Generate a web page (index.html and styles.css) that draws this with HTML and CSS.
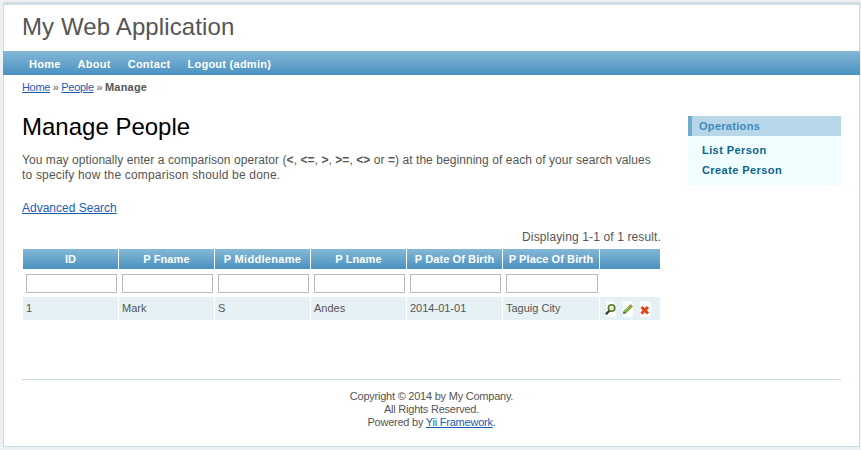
FILE: index.html
```html
<!DOCTYPE html>
<html lang="en">
<head>
<meta charset="utf-8">
<title>My Web Application - Manage People</title>
<link rel="stylesheet" href="styles.css">
</head>
<body>
<div class="page">
  <header class="logo">My Web Application</header>
  <nav class="menu"><a>Home</a><a>About</a><a>Contact</a><a>Logout (admin)</a></nav>
  <div class="crumbs"><a href="#">Home</a> » <a href="#">People</a> » <b>Manage</b></div>
  <div class="columns">
    <main class="content">
      <h1>Manage People</h1>
      <p class="intro"><span class="line1">You may optionally enter a comparison operator (<b>&lt;</b>, <b>&lt;=</b>, <b>&gt;</b>, <b>&gt;=</b>, <b>&lt;&gt;</b> or <b>=</b>) at the beginning of each of your search values</span><br><span class="line2">to specify how the comparison should be done.</span></p>
      <a class="search" href="#">Advanced Search</a>
      <div class="summary">Displaying 1-1 of 1 result.</div>
      <div class="grid head"><div>ID</div><div>P Fname</div><div>P Middlename</div><div>P Lname</div><div>P Date Of Birth</div><div>P Place Of Birth</div><div></div></div>
      <div class="grid filters"><div><input></div><div><input></div><div><input></div><div><input></div><div><input></div><div><input></div><div></div></div>
      <div class="grid row"><div>1</div><div>Mark</div><div>S</div><div>Andes</div><div>2014-01-01</div><div>Taguig City</div>
        <div class="actions">
          <svg viewBox="0 0 16 16"><path class="sheet" d="M3 0h7l3 3v13H3z"/><path d="M6.5 9.5 3 13.2" stroke="#26351c" stroke-width="2.2"/><circle cx="8.6" cy="7" r="3.2" fill="#e4f1d4" stroke="#55792c" stroke-width="1.6"/></svg>
          <svg viewBox="0 0 16 16"><path class="sheet" d="M3 0h7l3 3v13H3z"/><path d="m5 11 5.5-5.5" stroke="#79ae3b" stroke-width="3.6"/><path d="m10 6 1.8-1.8" stroke="#b58b55" stroke-width="3.4"/><path d="m3 13 .7-3 2.4 2.3z" fill="#4c4330"/><path d="m5.4 9.5 4-4" stroke="#b9d67c"/></svg>
          <svg viewBox="0 0 16 16"><path class="sheet" d="M3 0h8l3 3v13H3z"/><path d="m4.5 6 6.5 6.5m0-6.5-6.5 6.5" stroke="#dc4521" stroke-width="3.1"/></svg>
        </div></div>
    </main>
    <aside class="portlet">
      <div class="portlet-title">Operations</div>
      <div class="portlet-body"><a>List Person</a><a>Create Person</a></div>
    </aside>
  </div>
  <footer class="footer">Copyright © 2014 by My Company.<br>All Rights Reserved.<br>Powered by <a href="#">Yii Framework</a>.</footer>
</div>
</body>
</html>
```
FILE: styles.css
```css
* { box-sizing: border-box; }
body { margin: 0; background: #edf1f4; color: #555; font: 12px/15px "Liberation Sans", Arial, sans-serif; height: 450px; overflow: hidden; }
a[href] { color: #1d5cb5; }
.page { margin: 2px 1px 0 3px; height: 445px; background: #fff; border: 1px solid #c9dde3; border-top: 3px solid #d0dde3; }
.logo { height: 46px; padding: 8px 0 0 18px; font-size: 24px; line-height: 28px; letter-spacing: .12px; }
.menu { display: flex; height: 24px; margin: 0 -1px; padding: 0 0 0 26px; gap: 17px; background: linear-gradient(#84b8d6, #4a91c1); color: #fff; font: bold 11px/26px "Liberation Sans", Arial, sans-serif; letter-spacing: .26px; }
.crumbs { height: 26px; padding: 6px 0 0 18px; font-size: 11px; line-height: 13px; letter-spacing: -.32px; }
.crumbs b { letter-spacing: .2px; }
.columns { display: flex; height: 278px; padding: 0 18px; justify-content: space-between; }
.content { width: 639px; }
h1 { margin: 12px 0; color: #000; font-size: 24px; line-height: 28px; font-weight: 400; }
.intro { margin: 0; white-space: nowrap; }
.line1 { letter-spacing: .06px; }
.line2 { letter-spacing: .18px; }
.search { display: block; width: max-content; margin-top: 18px; }
.summary { margin-top: 14px; text-align: right; letter-spacing: .13px; }
.grid { display: grid; grid-template-columns: 95px 95px 95px 95px 95px 96px 60px; gap: 1px; margin-left: 1px; font-size: 11px; }
.head { height: 20px; margin-top: 4px; color: #fff; font-weight: 700; line-height: 21px; text-align: center; letter-spacing: .1px; }
.head > div { height: 20px; background: linear-gradient(#84b8d6, #4a91c1); white-space: nowrap; }
.head > div:nth-child(3) { letter-spacing: .3px; }
.filters { height: 28px; padding-top: 5px; }
.filters > div { padding: 0 1px 0 3px; }
input { display: block; width: 100%; height: 19px; border: 1px solid #bbb; padding: 0; background: #fff; }
.row { height: 23px; line-height: 23px; }
.row > div { height: 23px; background: #e5f1f4; padding-left: 3px; white-space: nowrap; }
.row .actions { display: flex; padding: 4px 0 0 3px; gap: 1px; }
.actions svg { width: 16px; height: 16px; fill: none; }
.actions .sheet { fill: #fafcf9; }
.portlet { width: 153px; margin-top: 15px; font-size: 11px; font-weight: 700; }
.portlet-title { height: 20px; border-left: 4px solid #6faccf; background: #b7d6e7; color: #398ac4; padding-left: 7px; line-height: 20px; letter-spacing: .3px; }
.portlet-body { height: 49px; background: #effdff; padding: 4px 0 0 14px; color: #0d638e; line-height: 20px; letter-spacing: .42px; }
.portlet-body a { display: block; }
.footer { margin: 0 18px; padding-top: 10px; border-top: 1px solid #c9dde3; text-align: center; font-size: 11px; line-height: 13px; letter-spacing: -.23px; }
```
